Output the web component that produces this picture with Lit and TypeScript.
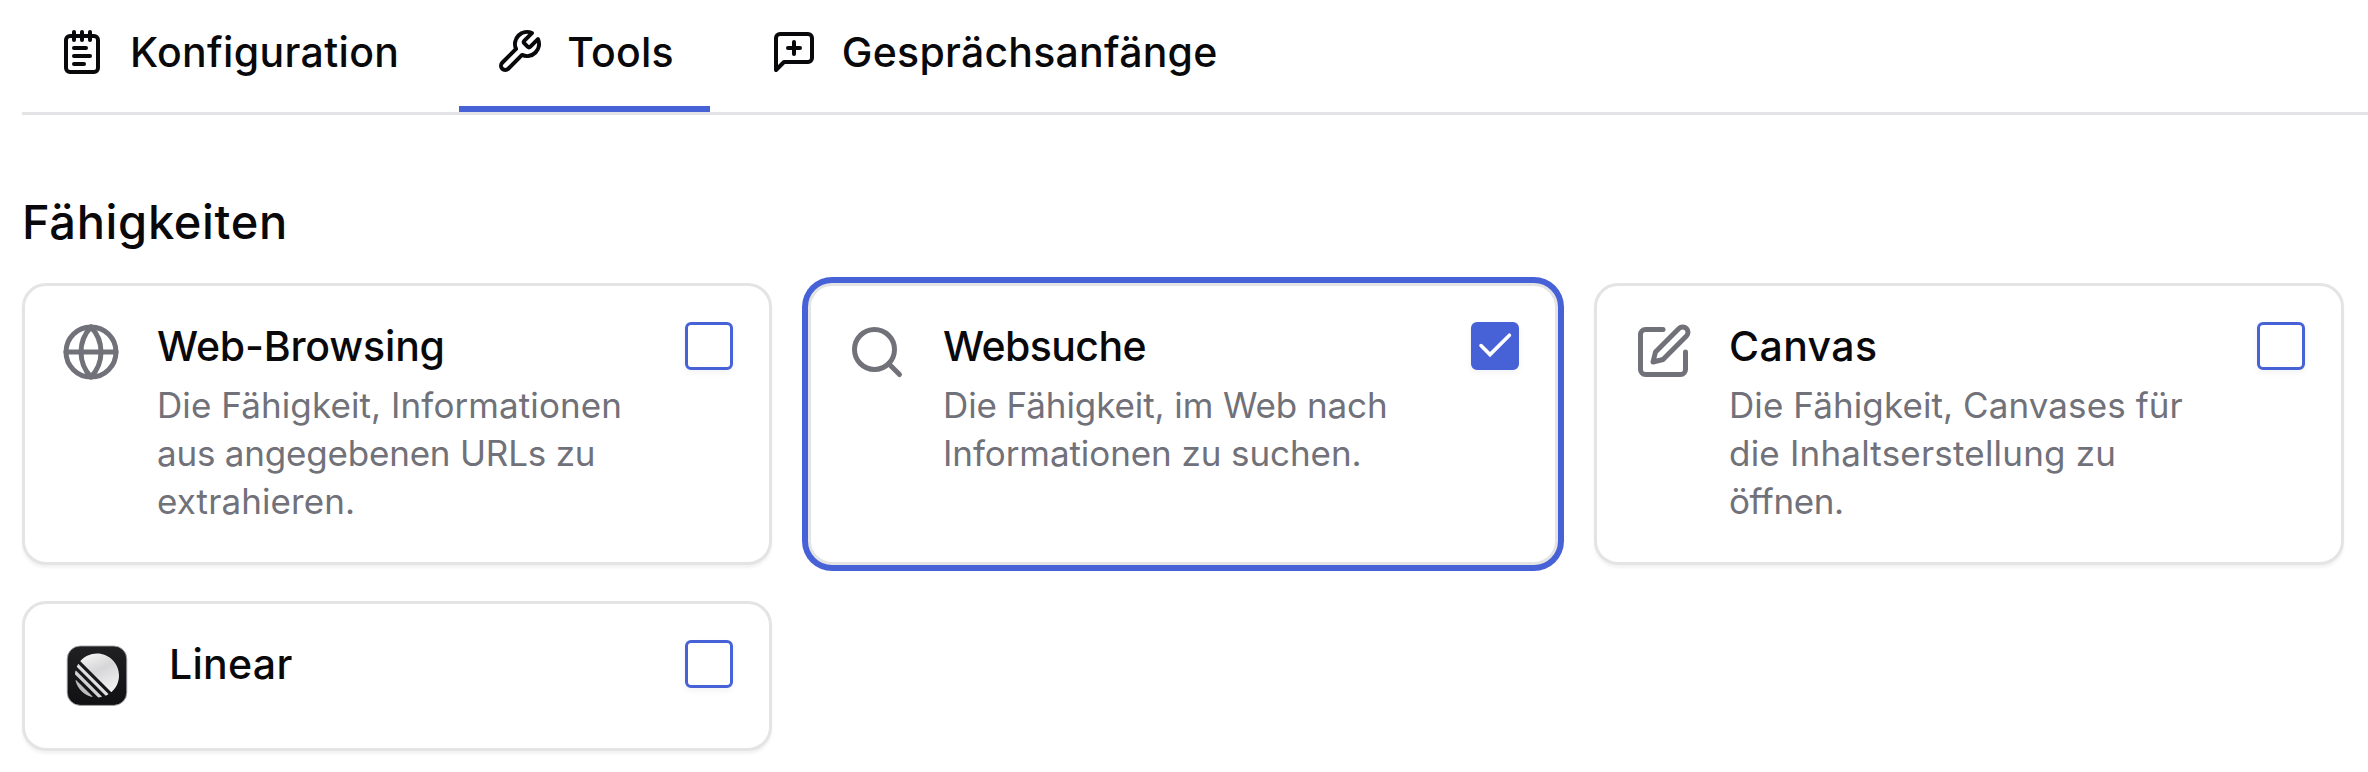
import { LitElement, html, css, svg, nothing, type SVGTemplateResult } from "lit";
import { customElement, property } from "lit/decorators.js";
import { styleMap } from "lit/directives/style-map.js";

/** A run of text together with its tracking in pixels. */
type Line = [text: string, tracking: number];

interface Tab {
  icon: string;
  label: Line;
  active?: boolean;
}

interface Capability {
  icon: string;
  title: Line;
  lines: Line[];
  checked?: boolean;
}

const ICONS: Record<string, SVGTemplateResult> = {
  notepad: svg`
    <path d="M8 2v4"/><path d="M12 2v4"/><path d="M16 2v4"/>
    <rect width="16" height="18" x="4" y="4" rx="2"/>
    <path d="M8 10h6"/><path d="M8 14h8"/><path d="M8 18h5"/>`,
  wrench: svg`
    <path d="M14.7 6.3a1 1 0 0 0 0 1.4l1.6 1.6a1 1 0 0 0 1.4 0l3.77-3.77a6 6 0 0 1-7.94 7.94l-6.91 6.91a2.12 2.12 0 0 1-3-3l6.91-6.91a6 6 0 0 1 7.94-7.94l-3.76 3.76z"/>`,
  message: svg`
    <path d="M21 15a2 2 0 0 1-2 2H7l-4 4V5a2 2 0 0 1 2-2h14a2 2 0 0 1 2 2z"/>
    <path d="M12 7v6"/><path d="M9 10h6"/>`,
  globe: svg`
    <circle cx="12" cy="12" r="10"/>
    <path d="M12 2a14.5 14.5 0 0 0 0 20 14.5 14.5 0 0 0 0-20"/>
    <path d="M2 12h20"/>`,
  search: svg`<circle cx="11" cy="11" r="8"/><path d="m21 21-4.3-4.3"/>`,
  pen: svg`
    <path d="M12 3H5a2 2 0 0 0-2 2v14a2 2 0 0 0 2 2h14a2 2 0 0 0 2-2v-7"/>
    <path d="M18.375 2.625a2.121 2.121 0 1 1 3 3L12 15l-4 1 1-4Z"/>`,
};

const TABS: Tab[] = [
  { icon: "notepad", label: ["Konfiguration", 0.35] },
  { icon: "wrench", label: ["Tools", 0.2], active: true },
  { icon: "message", label: ["Gesprächsanfänge", 0.25] },
];

const CAPABILITIES: Capability[] = [
  {
    icon: "globe",
    title: ["Web-Browsing", -0.18],
    lines: [
      ["Die Fähigkeit, Informationen", 0.09],
      ["aus angegebenen URLs zu", -0.2],
      ["extrahieren.", 0.1],
    ],
  },
  {
    icon: "search",
    title: ["Websuche", -0.58],
    lines: [
      ["Die Fähigkeit, im Web nach", -0.1],
      ["Informationen zu suchen.", -0.08],
    ],
    checked: true,
  },
  {
    icon: "pen",
    title: ["Canvas", 0.4],
    lines: [
      ["Die Fähigkeit, Canvases für", 0.09],
      ["die Inhaltserstellung zu", 0.2],
      ["öffnen.", -0.38],
    ],
  },
  { icon: "linear", title: ["Linear", 0.3], lines: [] },
];

const tracked = (tracking: number) => styleMap({ letterSpacing: `${tracking}px` });

@customElement("line-icon")
export class LineIcon extends LitElement {
  @property() name = "";

  static styles = css`
    :host { display: block; flex: none; }
    .icon { display: block; width: 100%; height: 100%; }
  `;

  render() {
    return html`<svg class="icon" viewBox="0 0 24 24" fill="none" stroke="currentColor"
      stroke-width="2" stroke-linecap="round" stroke-linejoin="round">${ICONS[this.name]}</svg>`;
  }
}

@customElement("linear-logo")
export class LinearLogo extends LitElement {
  static styles = css`
    :host { display: block; flex: none; }
    .logo { display: block; width: 72px; height: 72px; }
  `;

  render() {
    return html`<svg class="logo" viewBox="0 0 72 72">
      <defs>
        <linearGradient id="tile" x1="0" y1="0" x2="0" y2="1">
          <stop offset="0" stop-color="#202023"/><stop offset="1" stop-color="#111113"/>
        </linearGradient>
        <linearGradient id="disc" x1="0.2" y1="0" x2="0.7" y2="1">
          <stop offset="0" stop-color="#f4f4f4"/><stop offset="0.45" stop-color="#d6d6d8"/><stop offset="1" stop-color="#f2f2f2"/>
        </linearGradient>
      </defs>
      <rect x="6.2" y="6" width="59.6" height="59.4" rx="13" fill="url(#tile)" stroke="#a5a5a8" stroke-width="0.9"/>
      <g transform="translate(14 13.5) scale(0.44)" fill="url(#disc)">
        <path fill="#bdbdbf" d="M1.225 61.523c-.222-.949.908-1.546 1.597-.857l36.512 36.512c.689.689.092 1.819-.857 1.597C20.052 94.452 5.548 79.949 1.225 61.523Z"/>
        <path fill="#d2d2d4" d="M.002 46.889c-.018.283.089.56.29.76L52.35 99.709c.2.2.477.307.76.29 2.37-.148 4.694-.46 6.963-.926.764-.157 1.03-1.097.478-1.648L2.576 39.449c-.552-.552-1.491-.287-1.648.478A50 50 0 0 0 .002 46.889Z"/>
        <path fill="#e0e0e2" d="M4.211 29.705c-.167.374-.082.811.208 1.1l64.776 64.776c.289.29.726.374 1.1.208 1.786-.796 3.517-1.693 5.185-2.684.552-.328.637-1.087.183-1.541L8.436 24.337c-.454-.454-1.213-.369-1.541.183a50 50 0 0 0-2.684 5.185Z"/>
        <path d="M12.659 18.074c-.37-.37-.393-.964-.045-1.354C21.78 6.459 35.111 0 49.952 0 77.593 0 100 22.407 100 50.048c0 14.841-6.459 28.173-16.72 37.338-.39.348-.984.325-1.354-.045L12.659 18.074Z"/>
      </g>
    </svg>`;
  }
}

@customElement("check-box")
export class CheckBox extends LitElement {
  @property({ type: Boolean, reflect: true }) checked = false;

  static styles = css`
    :host { display: block; flex: none; }
    .box {
      box-sizing: border-box;
      width: 48px;
      height: 48px;
      border: 3px solid #4761d7;
      border-radius: 6px;
      box-shadow: 0 3px 6px rgba(0, 0, 0, 0.05);
    }
    :host([checked]) .box { background: #4761d7; }
    .mark { display: block; width: 42px; height: 42px; }
  `;

  render() {
    return html`<div class="box" role="checkbox" aria-checked=${this.checked}>
      ${this.checked
        ? html`<svg class="mark" viewBox="3 3 42 42" fill="none" stroke="#fff" stroke-width="3.6" stroke-linecap="round">
            <path d="M10 23.6 19 32.6 38.4 13.2"/>
          </svg>`
        : nothing}
    </div>`;
  }
}

@customElement("capability-card")
export class CapabilityCard extends LitElement {
  @property({ attribute: false }) item!: Capability;
  @property({ type: Boolean, reflect: true }) selected = false;

  static styles = css`
    :host {
      box-sizing: border-box;
      display: flex;
      align-items: flex-start;
      gap: 36px;
      padding: 36px;
      border: 3px solid #e4e4e5;
      border-radius: 24px;
      background: #fff;
      box-shadow: 0 3px 3px rgba(0, 0, 0, 0.05);
    }
    :host([selected]) { box-shadow: 0 0 0 6px #4761d7; }
    .glyph { width: 60px; height: 60px; color: #71717a; }
    .copy { flex: 1; min-width: 0; white-space: nowrap; }
    .title { font-size: 41px; font-weight: 500; line-height: 48px; color: #09090b; }
    .text { padding: 11px 0 1px; font-size: 35px; line-height: 48px; color: #71717a; }
  `;

  render() {
    const { icon, title, lines, checked } = this.item;
    return html`
      ${icon === "linear"
        ? html`<linear-logo></linear-logo>`
        : html`<line-icon class="glyph" name=${icon}></line-icon>`}
      <div class="copy">
        <div class="title" style=${tracked(title[1])}>${title[0]}</div>
        ${lines.length
          ? html`<div class="text">${lines.map(([t, s]) => html`<div style=${tracked(s)}>${t}</div>`)}</div>`
          : nothing}
      </div>
      <check-box ?checked=${!!checked}></check-box>
    `;
  }
}

@customElement("app-root")
export class AppRoot extends LitElement {
  static styles = css`
    :host {
      display: block;
      box-sizing: border-box;
      height: 772px;
      padding-left: 22px;
      overflow: hidden;
      background: #fff;
      color: #09090b;
      font-family: Inter, "Liberation Sans", sans-serif;
    }
    .tabs { display: flex; gap: 24px; border-bottom: 3px solid #e4e4e7; }
    .tab {
      display: flex;
      align-items: center;
      gap: 24px;
      padding: 28px 36px 30px;
      border-bottom: 6px solid transparent;
      font-size: 41px;
      font-weight: 500;
      line-height: 48px;
      white-space: nowrap;
    }
    .tab.active { border-bottom-color: #4761d7; }
    .tab-icon { width: 48px; height: 48px; }
    .heading {
      margin: 77px 0 31px;
      font-size: 47px;
      font-weight: 500;
      line-height: 60px;
      letter-spacing: 0.66px;
    }
    .grid {
      display: grid;
      grid-template-columns: repeat(3, 750px);
      gap: 36px;
    }
  `;

  render() {
    return html`
      <nav class="tabs">
        ${TABS.map(
          (t) => html`<div class="tab ${t.active ? "active" : ""}">
            <line-icon class="tab-icon" name=${t.icon}></line-icon>
            <span style=${tracked(t.label[1])}>${t.label[0]}</span>
          </div>`
        )}
      </nav>
      <h2 class="heading">Fähigkeiten</h2>
      <section class="grid">
        ${CAPABILITIES.map(
          (c) => html`<capability-card .item=${c} ?selected=${!!c.checked}></capability-card>`
        )}
      </section>
    `;
  }
}
